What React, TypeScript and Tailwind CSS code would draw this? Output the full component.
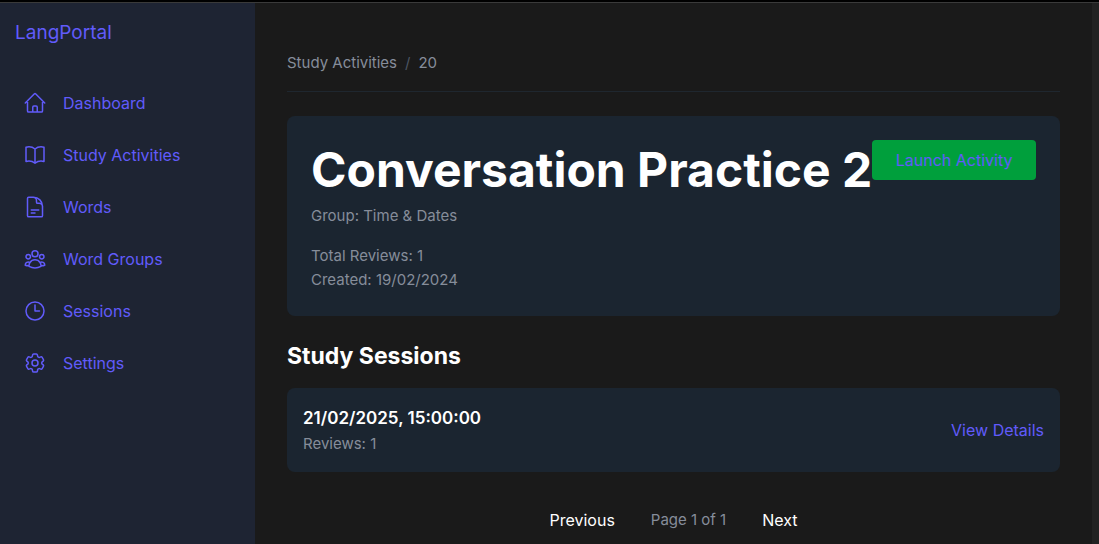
import { HiOutlineHome, HiOutlineBookOpen, HiOutlineDocumentText, HiOutlineUserGroup, HiOutlineClock, HiOutlineCog6Tooth } from 'react-icons/hi2';

const links = [
  { label: 'Dashboard', Icon: HiOutlineHome },
  { label: 'Study Activities', Icon: HiOutlineBookOpen },
  { label: 'Words', Icon: HiOutlineDocumentText },
  { label: 'Word Groups', Icon: HiOutlineUserGroup },
  { label: 'Sessions', Icon: HiOutlineClock },
  { label: 'Settings', Icon: HiOutlineCog6Tooth },
];

export default function App() {
  return (
    <div className="flex min-h-screen flex-col border-t-2 border-black bg-[#1a1a1a] font-['Inter',sans-serif] text-[15px] leading-6 text-[#868d9a]">
      <div className="flex flex-1 border-t border-[#3a3a3a]">
        <aside className="w-[255px] shrink-0 bg-[#1e2433] text-[#615bfb]">
          <a href="#" className="block px-[15px] pt-4 text-[19px] leading-7">LangPortal</a>
          <nav className="mt-8 flex flex-col gap-1 px-2">
            {links.map(({ label, Icon }) => (
              <a key={label} href="#" className="flex h-12 items-center gap-4 px-[15px] text-base">
                <Icon className="size-6" />
                {label}
              </a>
            ))}
          </nav>
        </aside>
        <main className="min-w-0 flex-1 px-8 pt-12">
          <nav aria-label="Breadcrumb" className="flex gap-2 border-b border-[#1f272f] pb-4">
            <a href="#">Study Activities</a>
            <span className="text-[#4b5563]">/</span>
            <span>20</span>
          </nav>
          <section className="mt-6 flex items-start justify-between rounded-lg bg-[#1b2530] p-6">
            <div className="shrink-0">
              <h1 className="text-5xl leading-15 font-bold text-white">Conversation Practice 2</h1>
              <p className="mt-1">Group: Time &amp; Dates</p>
              <p className="mt-4">Total Reviews: 1</p>
              <p>Created: 19/02/2024</p>
            </div>
            <button className="h-10 min-w-0 flex-1 rounded bg-[#009f3c] text-base whitespace-nowrap text-[#615bfb]">Launch Activity</button>
          </section>
          <h2 className="mt-6 text-[23px] leading-8 font-bold text-white">Study Sessions</h2>
          <section className="mt-4 flex items-center justify-between rounded-lg bg-[#1b2530] p-4">
            <div>
              <h3 className="text-[17px] leading-7 font-semibold text-white">21/02/2025, 15:00:00</h3>
              <p>Reviews: 1</p>
            </div>
            <a href="#" className="text-base text-[#615bfb]">View Details</a>
          </section>
          <div className="mt-7 flex items-center justify-center gap-9">
            <button className="h-10 text-base text-white">Previous</button>
            <span>Page 1 of 1</span>
            <button className="h-10 text-base text-white">Next</button>
          </div>
        </main>
        <div className="w-[7px] shrink-0 bg-[#222222]" />
      </div>
    </div>
  );
}
